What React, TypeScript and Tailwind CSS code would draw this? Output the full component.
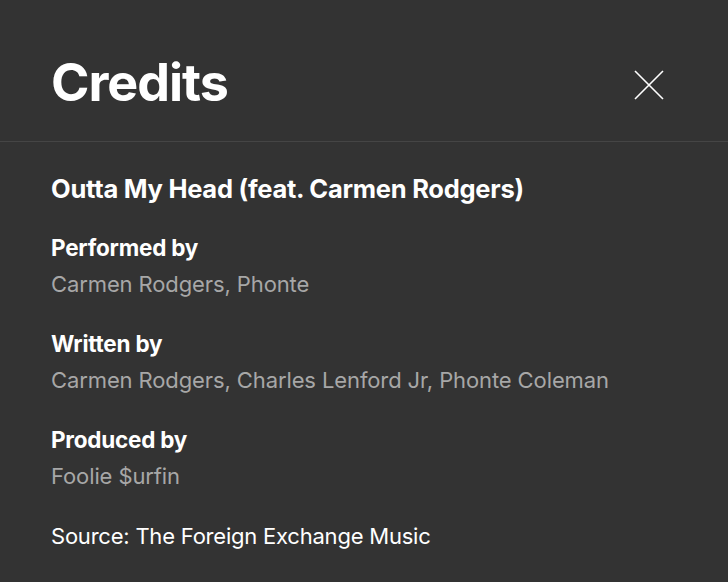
const credits = [
  { role: "Performed by", names: "Carmen Rodgers, Phonte" },
  { role: "Written by", names: "Carmen Rodgers, Charles Lenford Jr, Phonte Coleman" },
  { role: "Produced by", names: "Foolie $urfin" },
];

function CloseIcon() {
  return (
    <svg width="30" height="30" viewBox="0 0 30 30" fill="none" aria-hidden="true">
      <path d="M1 1L29 29M29 1L1 29" stroke="currentColor" strokeWidth="1.6" />
    </svg>
  );
}

export default function App() {
  return (
    <div
      className="h-[582px] w-[728px] overflow-hidden bg-[#333333] text-white"
      style={{ fontFamily: "Inter, 'Noto Sans', sans-serif" }}
    >
      <header className="flex h-[142px] items-center justify-between border-b border-[#454545] pl-[51px] pr-[64px] pt-[29px]">
        <h1 className="-mt-[4px] text-[52px] font-bold leading-none tracking-[-0.02em]">Credits</h1>
        <button className="text-white" aria-label="Close">
          <CloseIcon />
        </button>
      </header>

      <div className="px-[51px] pt-[31px]">
        <h2 className="text-[25.5px] font-bold leading-[32px] tracking-[-0.01em]">
          Outta My Head (feat. Carmen Rodgers)
        </h2>
        <dl className="mt-[29px] flex flex-col gap-[32px]">
          {credits.map((c) => (
            <div key={c.role}>
              <dt className="text-[22.5px] font-bold leading-[28px] tracking-[-0.01em]">{c.role}</dt>
              <dd className="mt-[8px] text-[22px] leading-[28px] tracking-[-0.005em] text-[#a7a7a7]">{c.names}</dd>
            </div>
          ))}
        </dl>
        <p className="mt-[32px] text-[22px] leading-[28px] tracking-[-0.01em]">
          Source: The Foreign Exchange Music
        </p>
      </div>
    </div>
  );
}
